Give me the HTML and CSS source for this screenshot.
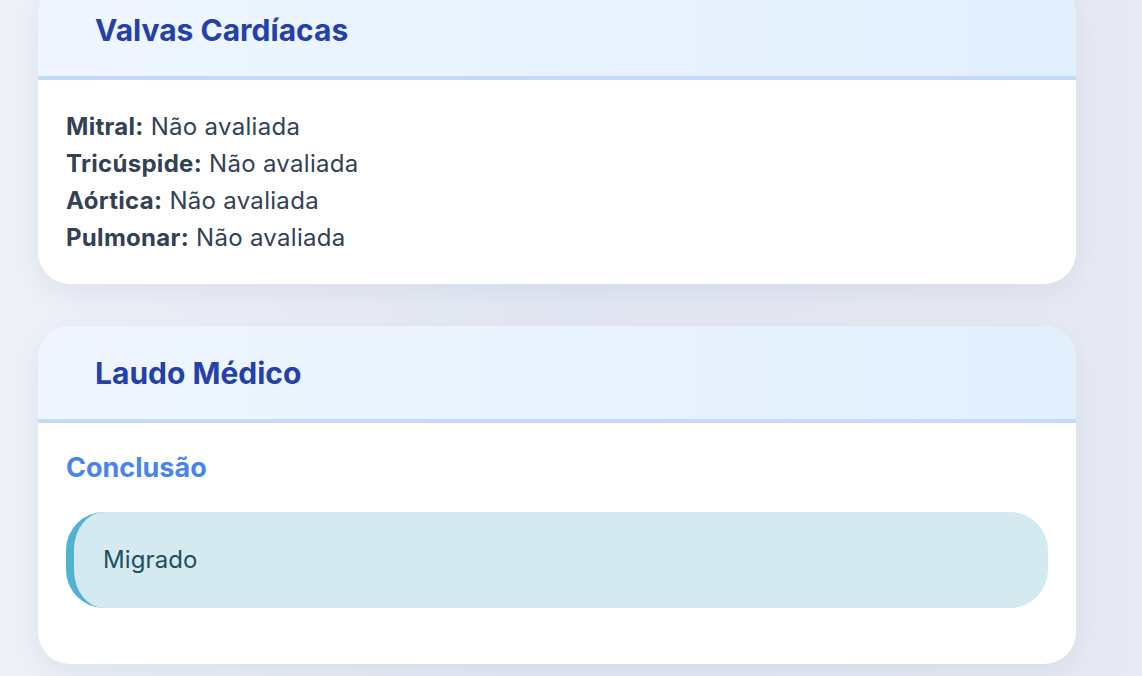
FILE: index.html
```html
<!DOCTYPE html>
<html lang="pt">
<head>
<meta charset="utf-8">
<link rel="stylesheet" href="styles.css">
</head>
<body>
<main class="page">
  <section class="card">
    <header class="card-header"><h2>Valvas Cardíacas</h2></header>
    <div class="card-body valves">
      <p><strong>Mitral:</strong> Não avaliada</p>
      <p><strong>Tricúspide:</strong> Não avaliada</p>
      <p><strong>Aórtica:</strong> Não avaliada</p>
      <p><strong>Pulmonar:</strong> Não avaliada</p>
    </div>
  </section>
  <section class="card">
    <header class="card-header"><h2>Laudo Médico</h2></header>
    <div class="card-body report">
      <h3>Conclusão</h3>
      <div class="conclusion">Migrado</div>
    </div>
  </section>
</main>
</body>
</html>
```

FILE: styles.css
```css
html, body {
  margin: 0;
  padding: 0;
  height: 100%;
}
body {
  font-family: Inter, "Noto Sans", sans-serif;
  background: linear-gradient(90deg, #eef1f7 0%, #e3e7f3 50%, #e7eaf3 100%);
  overflow: hidden;
}
.page {
  display: flex;
  flex-direction: column;
  gap: 42px;
  width: 1038px;
  margin: -17px 0 0 38px;
}
.card {
  background: #fff;
  border-radius: 32px;
  overflow: hidden;
  box-shadow: 0 8px 28px rgba(90, 105, 160, 0.10);
}
.card-header {
  height: 93px;
  display: flex;
  align-items: center;
  padding-left: 57px;
  background: linear-gradient(90deg, #eff6ff 0%, #e2effd 100%);
  border-bottom: 4px solid #c3dafb;
}
.card-header h2 {
  margin: 0;
  font-size: 30px;
  font-weight: 700;
  color: #2540a8;
}
.card-body {
  padding: 28px 28px 0;
}
.valves {
  padding-bottom: 28px;
}
.valves p {
  margin: 0;
  font-size: 24px;
  line-height: 37px;
  letter-spacing: 0.3px;
  color: #334155;
}
.valves strong {
  font-weight: 700;
}
.report {
  padding-top: 28px;
  padding-bottom: 56px;
}
.report h3 {
  margin: 0 0 27px;
  font-size: 27px;
  line-height: 34px;
  font-weight: 700;
  color: #4b83ee;
}
.conclusion {
  background: #d5eaf0;
  border-left: 8px solid #4fb3d1;
  border-radius: 38px;
  padding: 34px 29px;
  font-size: 24px;
  line-height: 28px;
  letter-spacing: 0.1px;
  color: #1f4e5d;
}
```
